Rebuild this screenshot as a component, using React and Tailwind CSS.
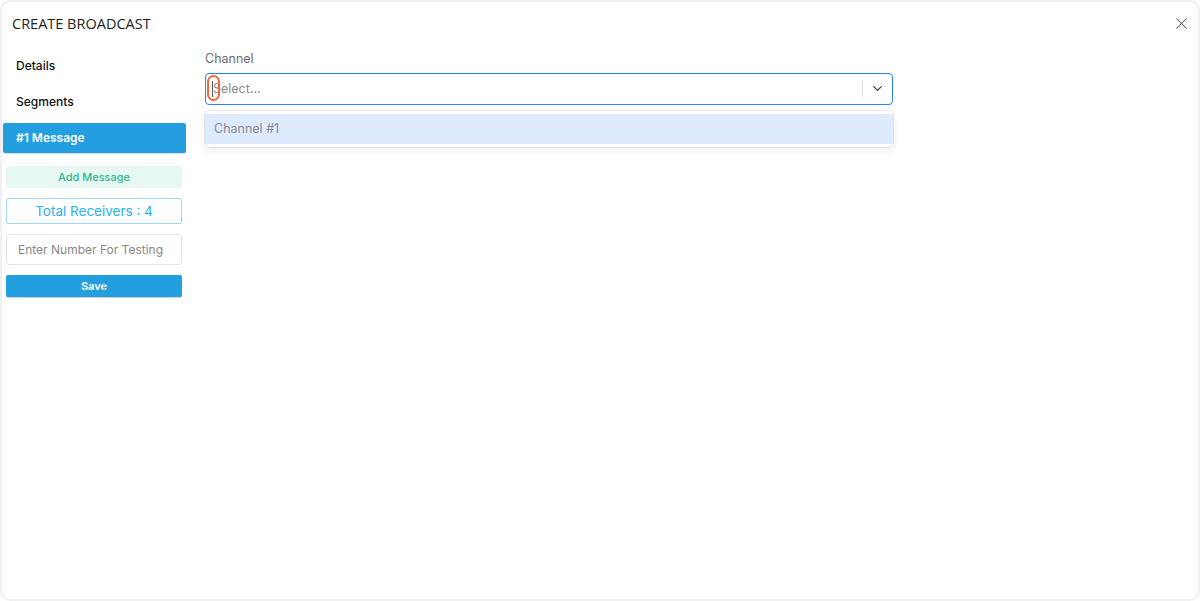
import { X, ChevronDown } from 'lucide-react';

const font = { fontFamily: '"Inter", "Open Sans", sans-serif' };

export default function App() {
  return (
    <div className="w-[1200px] h-[601px] bg-white" style={font}>
      <div className="h-full border-2 border-[#efeff5] rounded-[10px] flex flex-col">
        {/* Header */}
        <div className="flex items-center justify-between h-[44px] pl-[10px] pr-[7px] pb-[1px]">
          <h1 className="text-[14.5px] text-[#222]" style={{ fontFamily: '"Open Sans", sans-serif' }}>CREATE BROADCAST</h1>
          <X size={19} strokeWidth={1.3} className="text-[#555]" />
        </div>

        <div className="flex flex-1 pt-[2px]">
          {/* Sidebar */}
          <div className="w-[184px] pl-[1px] flex flex-col">
            <div className="h-[36px] flex items-center pl-[13px] text-[12px] font-medium text-[#111]">Details</div>
            <div className="h-[36px] flex items-center pl-[13px] text-[12px] font-medium text-[#111]">Segments</div>
            <div className="h-[30px] flex items-center pl-[13px] mt-[3px] bg-[#239fe0] rounded-[2px] text-[12px] font-semibold text-white shadow-[0_1px_1px_rgba(0,0,0,0.15)]">#1 Message</div>
            <div className="pl-[3px] pr-[4px] flex flex-col">
              <div className="mt-[13px] h-[22px] flex items-center justify-center bg-[#e7f7f4] rounded-[3px] text-[11px] font-medium text-[#2fb889]">Add Message</div>
              <div className="mt-[10px] h-[26px] flex items-center justify-center border border-[#9dd8fb] rounded-[2px] text-[13.5px] text-[#27b1ef]">Total Receivers : 4</div>
              <div className="mt-[10px] h-[31px] flex items-center pl-[11px] border border-[#e4e4e8] rounded-[3px] text-[12px] text-[#888]">Enter Number For Testing</div>
              <div className="mt-[10px] h-[22px] flex items-center justify-center bg-[#239fe0] rounded-[2px] text-[11px] font-semibold text-white shadow-[0_1px_1px_rgba(0,0,0,0.2)]">Save</div>
            </div>
          </div>

          {/* Main */}
          <div className="pl-[19px] pt-[2px]">
            <div className="text-[12.5px] text-[#6b6b74]">Channel</div>
            <div className="mt-[4px] w-[688px] h-[32px] border-[1.5px] border-[#2684ff] rounded-[4px] flex items-center relative">
              <div className="absolute left-[1px] top-[1px] w-[13px] h-[26px] border-2 border-[#ef6a3c] rounded-[7px]" />
              <div className="absolute left-[6px] top-[7px] w-px h-[16px] bg-[#555]" />
              <div className="flex-1 pl-[7px] pt-[2px] text-[12.5px] text-[#8a8a92]">Select...</div>
              <div className="w-px h-[17px] bg-[#ddd]" />
              <div className="w-[29px] flex justify-center">
                <ChevronDown size={15} strokeWidth={2.2} className="text-[#444]" />
              </div>
            </div>
            <div className="mt-[6px] w-[688px] rounded-[4px] bg-white shadow-[0_0_0_1px_rgba(0,0,0,0.08),0_3px_8px_rgba(0,0,0,0.08)] py-[3px]">
              <div className="h-[30px] flex items-center pl-[9px] pt-[2px] bg-[#deebff] text-[12.5px] text-[#8a8a92]">Channel #1</div>
            </div>
          </div>
        </div>
      </div>
    </div>
  );
}
